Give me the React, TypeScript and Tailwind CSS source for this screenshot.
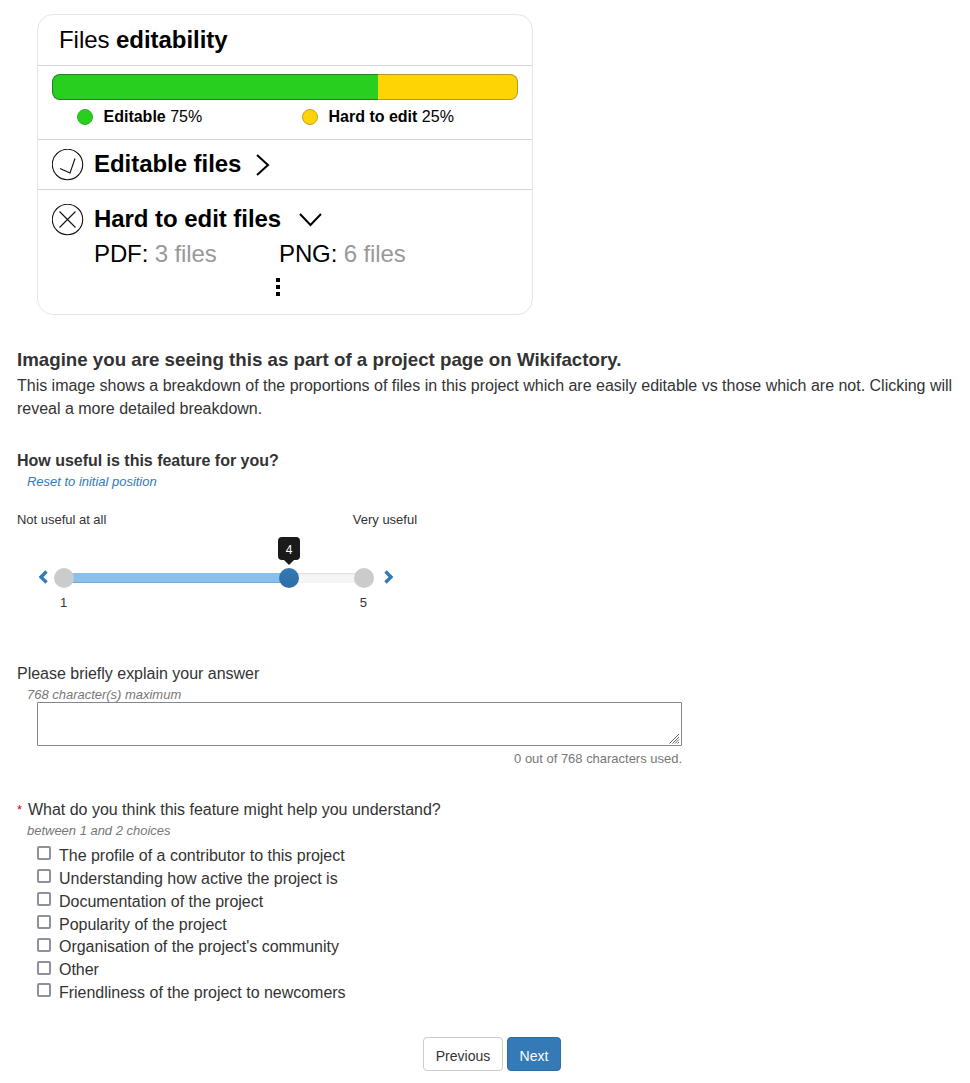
import { useState } from "react";

const choices = [
  "The profile of a contributor to this project",
  "Understanding how active the project is",
  "Documentation of the project",
  "Popularity of the project",
  "Organisation of the project's community",
  "Other",
  "Friendliness of the project to newcomers",
];

function EditabilityCard() {
  return (
    <section className="ml-[37px] h-[301px] w-[496px] rounded-[16px] border border-[#e6e6e6] text-black">
      <h2 className="flex h-[51px] items-center border-b border-[#d4d4d4] pl-[21px] text-[24px] tracking-[-0.05px]">
        <span className="whitespace-pre">Files </span>
        <span className="font-bold">editability</span>
      </h2>
      <div className="h-[74px] border-b border-[#d4d4d4] px-[14px] pt-[8px]">
        <div className="flex h-[26px]">
          <div className="w-[326px] rounded-l-[8px] border border-r-0 border-[#2b7d25] bg-[#28cf1e]" />
          <div className="w-[140px] rounded-r-[8px] border border-l-0 border-[#b79b22] bg-[#ffd404]" />
        </div>
        <div className="flex h-[34px] items-center pl-[25px] text-[16px]">
          <div className="flex w-[225px] items-center">
            <span className="mr-[10.500px] size-[16px] rounded-full border border-[#27b51f] bg-[#28cf1e]" />
            <span><b>Editable</b> 75%</span>
          </div>
          <div className="flex items-center">
            <span className="mr-[10.500px] size-[16px] rounded-full border border-[#c3a21a] bg-[#ffd404]" />
            <span><b>Hard to edit</b> 25%</span>
          </div>
        </div>
      </div>
      <div className="flex h-[50px] items-center border-b border-[#d4d4d4] pl-[14px]">
        <svg className="size-[32px]" viewBox="0 0 32 32" fill="none" stroke="#111" strokeWidth="1.1">
          <circle cx="15.5" cy="15.5" r="15.2" />
          <path d="M8 19.5L18 24L23 9.5" />
        </svg>
        <span className="ml-[10px] -mt-px text-[24px] font-bold tracking-[-0.05px]">Editable files</span>
        <svg className="ml-[13px] size-[24px]" viewBox="0 0 24 24" fill="none" stroke="#000" strokeWidth="2">
          <path d="M3 2L14 12L3 22" />
        </svg>
      </div>
      <div className="pt-[13px]">
        <div className="flex h-[33px] items-center pl-[14px]">
          <svg className="size-[32px]" viewBox="0 0 32 32" fill="none" stroke="#111" strokeWidth="1.1">
            <circle cx="15.5" cy="15.5" r="15.2" />
            <path d="M7.5 7.5L23.5 23.5M23.5 7.5L7.5 23.5" />
          </svg>
          <span className="ml-[10px] -mt-px text-[24px] font-bold tracking-[-0.05px]">Hard to edit files</span>
          <svg className="ml-[17px] -mt-[2px] size-[24px]" viewBox="0 0 24 24" fill="none" stroke="#000" strokeWidth="2">
            <path d="M2 7L12.500 18L23 7" />
          </svg>
        </div>
        <div className="flex h-[36px] items-center pl-[56px] text-[24px] tracking-[-0.12px]">
          <span className="w-[185px]">PDF: <span className="text-[#999]">3 files</span></span>
          <span>PNG: <span className="text-[#999]">6 files</span></span>
        </div>
        <div className="flex flex-col gap-[3px] pt-[6px] pl-[238px]">
          <i className="size-[4px] bg-black" />
          <i className="size-[4px] bg-black" />
          <i className="size-[4px] bg-black" />
        </div>
      </div>
    </section>
  );
}

function UsefulnessSlider({ value }: { value: number }) {
  return (
    <div>
      <div className="flex h-[20px] w-[400px] items-center justify-between text-[13px]">
        <span>Not useful at all</span>
        <span>Very useful</span>
      </div>
      <div className="mt-[38px] flex h-[20px] items-center pl-[21px]">
        <svg className="mb-[3px] h-[14px] w-[12px]" viewBox="0 0 12 14" fill="none" stroke="#337ab7" strokeWidth="3.4">
          <path d="M8.500 1.500L3 7L8.500 12.500" />
        </svg>
        <div className="relative mx-[14px] h-[10px] w-[300px] bg-[#f5f5f5] shadow-[inset_0_1px_2px_rgba(0,0,0,0.1)]">
          <div className="h-full bg-[#89bfec] shadow-[inset_0_-1px_0_rgba(0,0,0,0.12)]" style={{ width: `${(value - 1) * 25}%` }} />
          <span className="absolute -top-[5px] -left-[10px] size-[20px] rounded-full bg-[#cbcbcb]" />
          <span className="absolute -top-[5px] -right-[10px] size-[20px] rounded-full bg-[#cbcbcb]" />
          <span className="absolute -top-[5px] size-[20px] -translate-x-1/2 rounded-full bg-linear-to-b from-[#337ab7] to-[#2e6da4]" style={{ left: `${(value - 1) * 25}%` }} />
          <span className="absolute -top-[36px] flex h-[23px] w-[22px] -translate-x-1/2 items-center justify-center rounded-[4px] bg-[#1a1a1a] pt-[2px] text-[12px] text-white" style={{ left: `${(value - 1) * 25}%` }}>
            {value}
            <span className="absolute top-full border-x-[5px] border-t-[5px] border-x-transparent border-t-[#1a1a1a]" />
          </span>
        </div>
        <svg className="mb-[3px] h-[14px] w-[12px] translate-x-[5px]" viewBox="0 0 12 14" fill="none" stroke="#337ab7" strokeWidth="3.4">
          <path d="M2.500 1.500L8 7L2.500 12.500" />
        </svg>
      </div>
      <div className="mt-[5px] ml-[43px] flex h-[20px] w-[307px] items-center justify-between text-[13px]">
        <span>1</span>
        <span>5</span>
      </div>
    </div>
  );
}

export default function App() {
  const [answer, setAnswer] = useState("");
  return (
    <main className="h-[1083px] w-[970px] overflow-hidden bg-white pt-[14px] font-['Liberation_Sans',Arial,sans-serif] text-[16px] text-[#333]">
      <EditabilityCard />
      <div className="pl-[17px] tracking-[-0.016px]">
        <h3 className="mt-[33px] h-[24px] text-[18.720px] leading-[24px] font-bold tracking-normal">Imagine you are seeing this as part of a project page on Wikifactory.</h3>
        <p className="mt-[2px] w-[945px] leading-[23px] tracking-[-0.01px]">This image shows a breakdown of the proportions of files in this project which are easily editable vs those which are not. Clicking will reveal a more detailed breakdown.</p>
        <h4 className="mt-[30px] h-[22px] leading-[22px] font-bold">How useful is this feature for you?</h4>
        <a className="block h-[20px] pl-[10px] text-[13px] leading-[20px] text-[#337ab7] italic">Reset to initial position</a>
        <div className="h-[18px]" />
        <UsefulnessSlider value={4} />
        <div className="mt-[50px] h-[22px] leading-[22px]">Please briefly explain your answer</div>
        <div className="h-[17px] pl-[10px] text-[13px] leading-[20px] text-[#777] italic">768 character(s) maximum</div>
        <div className="relative ml-[20px] w-[645px]">
          <textarea
            className="block h-[44px] w-full resize-none rounded-[1px] border border-[#85858c] bg-white p-1"
            maxLength={768}
            value={answer}
            onChange={(event) => setAnswer(event.target.value)}
          />
          <svg className="pointer-events-none absolute right-[2px] bottom-[2px] size-[11px]" viewBox="0 0 11 11" stroke="#666" strokeWidth="1">
            <path d="M0.500 10.500L10 1M3.500 10.500L10 4M6 10.500L10 6.500M8.500 10.500L10 9" />
          </svg>
        </div>
        <div className="mt-[3px] h-[20px] w-[665px] text-right text-[13px] leading-[20px] text-[#777]">{answer.length} out of 768 characters used.</div>
        <div className="mt-[30px] flex h-[22px] items-center">
          <span className="w-[11px] text-[13px] text-[#e0002d]">*</span>
          <span>What do you think this feature might help you understand?</span>
        </div>
        <div className="h-[20px] pl-[10px] text-[13px] leading-[20px] text-[#777] italic">between 1 and 2 choices</div>
        <div className="mt-[3.700px] flex flex-col pl-[20px]">
          {choices.map((choice) => (
            <label key={choice} className="flex h-[22.850px] items-center">
              <input type="checkbox" className="mr-[8px] mb-[5.600px] size-[14px] appearance-none rounded-[2px] border-2 border-[#8f8f9d] bg-white" />
              {choice}
            </label>
          ))}
        </div>
      </div>
      <div className="mt-[32.300px] ml-[423px] flex gap-[4px] text-[14px]">
        <button className="h-[34px] w-[80px] rounded-[4px] border border-[#ccc] bg-white pt-[5px]">Previous</button>
        <button className="h-[34px] w-[54px] rounded-[4px] border border-[#2e6da4] bg-[#337ab7] pt-[5px] text-white">Next</button>
      </div>
    </main>
  );
}
